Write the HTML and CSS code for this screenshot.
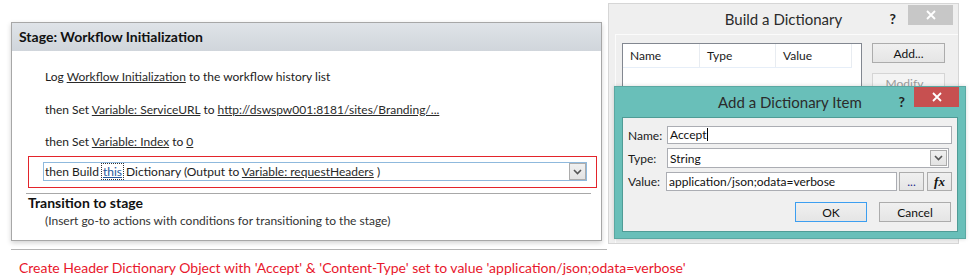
FILE: index.html
```html
<!DOCTYPE html>
<html lang="en">
<head>
    <meta charset="UTF-8">
    <meta name="viewport" content="width=device-width, initial-scale=1.0">
    <title>Build a Dictionary</title>
    <link rel="stylesheet" href="styles.css">
</head>
<body>
    <div class="page">
        <section class="stage">
            <div class="stage-head">Stage: Workflow Initialization</div>
            <div class="stage-body">
                <div class="action">Log <a>Workflow Initialization</a> to the workflow history list</div>
                <div class="action">then Set <a>Variable: ServiceURL</a> to <a>http://dswspw001:8181/sites/Branding/...</a></div>
                <div class="action">then Set <a>Variable: Index</a> to <a>0</a></div>
                <div class="highlight">
                    <div class="build-select">
                        <span class="build-text">then Build <span class="focus">this</span> Dictionary (Output to <a>Variable: requestHeaders</a> )</span>
                        <span class="drop">
                            <svg width="9" height="6" viewBox="0 0 9 6"><polyline points="1,1 4.5,4.5 8,1" fill="none" stroke="#555" stroke-width="1.6"/></svg>
                        </span>
                    </div>
                </div>
                <div class="separator"></div>
                <div class="transition-title">Transition to stage</div>
                <div class="transition-hint">(Insert go-to actions with conditions for transitioning to the stage)</div>
            </div>
        </section>
        <div class="rule"></div>
        <p class="caption">Create Header Dictionary Object with 'Accept' &amp; 'Content-Type' set to value 'application/json;odata=verbose'</p>
    </div>

    <!-- dialog windows stacked on top of the designer -->
    <div class="dialog build">
        <div class="title-bar">
            <span class="title">Build a Dictionary</span>
            <span class="help">?</span>
            <span class="close gray">
                <svg width="10" height="10" viewBox="0 0 10 10"><path d="M1 1 L9 9 M9 1 L1 9" stroke="#fff" stroke-width="1.8"/></svg>
            </span>
        </div>
        <div class="build-pane">
            <div class="list">
                <div class="list-head">
                    <span class="col col-name">Name</span>
                    <span class="col col-type">Type</span>
                    <span class="col col-value">Value</span>
                </div>
            </div>
            <div class="side-buttons">
                <button class="btn">Add...</button>
                <button class="btn disabled">Modify...</button>
            </div>
        </div>
    </div>

    <div class="dialog add">
        <div class="title-bar">
            <span class="title">Add a Dictionary Item</span>
            <span class="help">?</span>
            <span class="close red">
                <svg width="10" height="10" viewBox="0 0 10 10"><path d="M1 1 L9 9 M9 1 L1 9" stroke="#fff" stroke-width="1.8"/></svg>
            </span>
        </div>
        <div class="add-pane">
            <div class="fields">
                <label>Name:</label>
                <div class="input name-input">Accept<span class="caret"></span></div>
                <label>Type:</label>
                <div class="input type-select">
                    <span>String</span>
                    <span class="drop small">
                        <svg width="9" height="6" viewBox="0 0 9 6"><polyline points="1,1 4.5,4.5 8,1" fill="none" stroke="#555" stroke-width="1.6"/></svg>
                    </span>
                </div>
                <label>Value:</label>
                <div class="value-row">
                    <div class="input value-input">application/json;odata=verbose</div>
                    <button class="btn small-btn dots">...</button>
                    <button class="btn small-btn fx"><i>fx</i></button>
                </div>
            </div>
            <div class="actions">
                <button class="btn wide default">OK</button>
                <button class="btn wide">Cancel</button>
            </div>
        </div>
    </div>
</body>
</html>
```

FILE: styles.css
```css
body {
    margin: 0;
    background: #fff;
    font-family: 'Lato', 'Open Sans', sans-serif;
    font-size: 12px;
    color: #1c1c1c;
    position: relative;
    width: 977px;
    height: 279px;
    overflow: hidden;
}
.page {
    padding: 22px 0 0 11px;
}
.stage {
    width: 591px;
    height: 219px;
    box-sizing: border-box;
    border: 1px solid #a7a7a7;
    background: #fff;
    box-shadow: 0 2px 5px rgba(0,0,0,0.18);
}
.stage-head {
    height: 28px;
    line-height: 28px;
    padding-left: 7px;
    background: linear-gradient(#dfe3e8, #d0d5db);
    font-weight: bold;
    font-size: 14px;
    color: #111;
}
.stage-body {
    padding-top: 18px;
}
.action {
    height: 16px;
    line-height: 16px;
    margin: 0 0 16.5px 33px;
}
.action:nth-child(3) {
    margin-bottom: 6px;
}
a {
    color: #2a2a2a;
    text-decoration: underline;
}
.highlight {
    margin-left: 16px;
    width: 569px;
    height: 32px;
    box-sizing: border-box;
    border: 1px solid #e3242b;
    padding: 5px 0 0 14px;
}
.build-select {
    width: 544px;
    height: 19px;
    box-sizing: border-box;
    border: 1px solid #8fb9dd;
    display: flex;
    align-items: center;
    justify-content: space-between;
    padding-left: 1px;
}
.build-text {
    line-height: 17px;
}
.focus {
    color: #24589a;
    text-decoration: underline;
    outline: 1px dotted #333;
    padding: 0 1px;
}
.drop {
    width: 17px;
    height: 17px;
    box-sizing: border-box;
    border: 1px solid #acacac;
    background: linear-gradient(#f0f0f0, #e3e3e3);
    display: flex;
    align-items: center;
    justify-content: center;
}
.separator {
    margin: 5px 0 0 14px;
    width: 565px;
    border-top: 1px solid #a8a8a8;
}
.transition-title {
    margin-left: 16px;
    font-weight: bold;
    font-size: 14px;
    line-height: 17px;
    color: #111;
}
.transition-hint {
    margin: 1px 0 0 33px;
    line-height: 17px;
    color: #333;
}
.rule {
    margin-top: 8px;
    width: 596px;
    border-top: 1px solid #b4b4b4;
}
.caption {
    margin: 9px 0 0 8px;
    font-size: 14px;
    color: #e8172c;
}

/* dialogs */
.dialog {
    position: absolute;
    box-sizing: border-box;
}
.title-bar {
    height: 30px;
    position: relative;
}
.title {
    display: block;
    text-align: center;
    font-size: 15px;
    line-height: 30px;
    color: #2b2b2b;
}
.help {
    position: absolute;
    top: 6px;
    font-weight: bold;
    font-size: 14px;
    color: #222;
}
.close {
    position: absolute;
    top: 1px;
    width: 45px;
    height: 20px;
    display: flex;
    align-items: center;
    justify-content: center;
}
.close.gray {
    background: #c7c7c7;
}
.close.red {
    background: #c75050;
}
.build {
    left: 608px;
    top: 3px;
    width: 351px;
    height: 241px;
    background: #efefef;
    border: 1px solid #d6d6d6;
}
.build .help {
    right: 62px;
}
.build .close {
    right: 5px;
}
.build-pane {
    margin-left: 6px;
    border-top: 1px solid #fbfbfb;
    border-left: 1px solid #fbfbfb;
    height: 200px;
    display: flex;
    padding: 8px 0 0 6px;
    gap: 10px;
}
.list {
    width: 240px;
    height: 188px;
    box-sizing: border-box;
    border: 1px solid #828790;
    background: #fff;
}
.list-head {
    display: flex;
    height: 23px;
    border-bottom: 1px solid #e6eef8;
    margin-right: 9px;
}
.col {
    line-height: 23px;
    padding-left: 7px;
    box-sizing: border-box;
    border-right: 1px solid #e8ecf1;
    color: #1a1a1a;
}
.col-name { width: 77px; }
.col-type { width: 76px; }
.col-value { width: 76px; }
.side-buttons {
    display: flex;
    flex-direction: column;
    gap: 10px;
}
.btn {
    font-family: inherit;
    font-size: 12px;
    color: #111;
    box-sizing: border-box;
    border: 1px solid #acacac;
    background: linear-gradient(#f0f0f0, #e5e5e5);
    padding: 0;
    margin: 0;
    width: 73px;
    height: 20px;
}
.btn.disabled {
    color: #9b9b9b;
    border-color: #d5d5d5;
    background: #f4f4f4;
}
.add {
    left: 614px;
    top: 86px;
    width: 352px;
    height: 153px;
    background: #69bfb9;
    border: 1px solid #5aa8a2;
    box-shadow: 0 0 4px rgba(0,0,0,0.15);
}
.add .help {
    right: 60px;
}
.add .close {
    right: 6px;
    top: 0;
}
.add-pane {
    margin: 0 7px;
    height: 115px;
    box-sizing: border-box;
    border: 1px solid #4f9c96;
    background: #f0f0f0;
}
.fields {
    display: grid;
    grid-template-columns: 39px 1fr;
    row-gap: 4px;
    padding: 8px 6px 0 5px;
    align-items: center;
}
.fields label {
    color: #1a1a1a;
}
.input {
    box-sizing: border-box;
    border: 1px solid #abadb3;
    background: #fff;
    padding-left: 2px;
    color: #111;
}
.name-input {
    height: 18px;
    line-height: 16px;
}
.caret {
    display: inline-block;
    width: 1px;
    height: 13px;
    background: #000;
    vertical-align: -2px;
}
.type-select {
    height: 20px;
    width: 282px;
    display: flex;
    align-items: center;
    justify-content: space-between;
    padding-right: 1px;
}
.drop.small {
    width: 17px;
    height: 16px;
}
.value-row {
    display: flex;
    margin-left: -1px;
}
.value-input {
    width: 231px;
    height: 19px;
    line-height: 17px;
}
.small-btn {
    height: 19px;
    margin-left: 2px;
}
.dots {
    width: 25px;
    color: #1b2b8c;
}
.fx {
    width: 25px;
    margin-left: 3px;
    font-family: 'Liberation Serif', serif;
    font-weight: bold;
    font-size: 13px;
}
.actions {
    display: flex;
    justify-content: flex-end;
    gap: 12px;
    padding: 11px 6px 0 0;
}
.btn.wide {
    width: 72px;
    height: 20px;
}
.btn.default {
    border-color: #3c9ef0;
}
```
